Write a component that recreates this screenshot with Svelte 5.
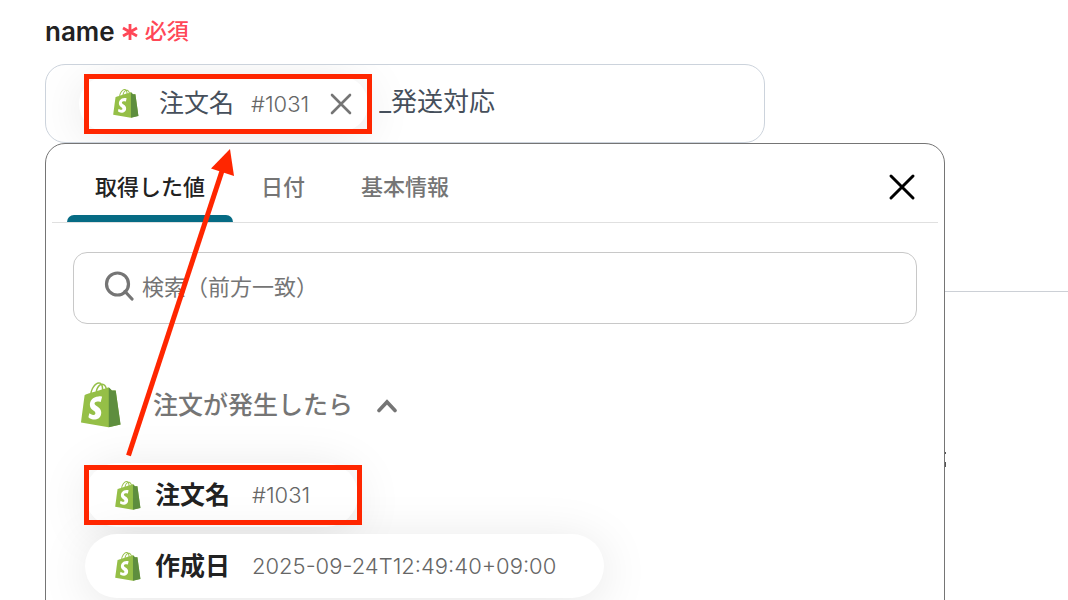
<script lang="ts">
  let suffix = $state('_発送対応');
  let query = $state('');
  let activeTab = $state('取得した値');
  let open = $state(true);
  let expanded = $state(true);
  let attached = $state(true);

  const tabs = ['取得した値', '日付', '基本情報'];
  const outputs = [
    { label: '注文名', value: '#1031' },
    { label: '作成日', value: '2025-09-24T12:49:40+09:00' }
  ];
</script>

{#snippet shopify()}
  <svg class="shopify" viewBox="0 0 110 125" aria-hidden="true">
    <path fill="#95bf47" d="M95.9 23.9c-.1-.6-.6-1-1.1-1s-9.3-.2-9.3-.2-7.4-7.2-8.1-7.9-2.2-.5-2.7-.3c0 0-1.4.4-3.7 1.1-.4-1.3-1-2.8-1.8-4.4-2.6-5-6.5-7.7-11.1-7.7-.3 0-.6 0-1 .1-.1-.2-.3-.3-.4-.5-2-2.2-4.6-3.2-7.7-3.1-6 .2-12 4.5-16.8 12.2-3.4 5.4-6 12.2-6.8 17.5-6.9 2.1-11.7 3.6-11.8 3.7-3.5 1.1-3.6 1.2-4 4.5C9.3 40.4.1 110.8.1 110.8l75.6 13.1 32.8-8.1S96 24.5 95.9 23.9zM67.2 16.8c-1.8.5-3.8 1.2-5.9 1.8 0-3-.4-7.3-1.8-10.9 4.5.9 6.7 6 7.7 9.1zM57.2 19.9c-4 1.2-8.4 2.6-12.8 3.9 1.2-4.7 3.6-9.4 6.4-12.5 1.1-1.1 2.6-2.4 4.3-3.2 1.8 3.5 2.2 8.4 2.1 11.8zM49.1 4c1.4 0 2.6.3 3.6.9-1.6.8-3.2 2.1-4.7 3.6-3.8 4.1-6.7 10.5-7.9 16.6-3.6 1.1-7.2 2.2-10.5 3.2C31.7 18.8 39.8 4.3 49.1 4z" />
    <path fill="#5e8e3e" d="M94.8 22.9c-.5 0-9.3-.2-9.3-.2s-7.4-7.2-8.1-7.9c-.3-.3-.6-.4-1-.5V124l32.8-8.1S95.8 25.2 95.7 24.6c0-1.3-.5-1.7-.9-1.7z" />
    <path fill="#fff" d="M58 39.9l-3.8 14.4s-4.3-2-9.4-1.6c-7.5.5-7.5 5.2-7.5 6.4.4 6.4 17.3 7.8 18.3 22.9.7 11.900-6.3 20-16.4 20.6-12.2.8-18.9-6.4-18.9-6.4l2.6-11s6.7 5.1 12.1 4.7c3.5-.2 4.8-3.1 4.7-5.1-.5-8.4-14.3-7.9-15.2-21.700-.7-11.6 6.9-23.2 23.8-24.3 6.5-.4 9.7 1.1 9.700 1.100z" />
  </svg>
{/snippet}

<main class="page">
  <div class="backdrop" aria-hidden="true">
    <svg width="2" height="18" viewBox="0 0 2 18">
      <path d="M0 2H1M0 11V16" stroke="#555" stroke-width="2" />
    </svg>
  </div>

  <label class="field-label" for="name-input">
    name
    <span class="required">
      <svg width="16" height="18" viewBox="0 0 16 18" aria-hidden="true">
        <path d="M8 2V18M1 6L15 14M15 6L1 14" stroke="currentColor" stroke-width="2.8" />
      </svg>
      <span class="ja">必須</span>
    </span>
  </label>

  <div class="field">
    {#if attached}
      <span class="pill token">
        {@render shopify()}
        <span class="token-label ja">注文名</span>
        <span class="value">#1031</span>
        <button class="remove" aria-label="削除" onclick={() => (attached = false)}>
          <svg width="22" height="22" viewBox="0 0 22 22">
            <path d="M2 2L20 20M20 2L2 20" stroke="#757575" stroke-width="2.6" stroke-linecap="round" />
          </svg>
        </button>
      </span>
    {/if}
    <input id="name-input" class="field-input" type="text" bind:value={suffix} />
  </div>

  {#if open}
    <section class="panel">
      <div class="panel-head">
        <div class="tabs" role="tablist">
          {#each tabs as tab}
            <button
              class="tab"
              class:active={tab === activeTab}
              role="tab"
              aria-selected={tab === activeTab}
              onclick={() => (activeTab = tab)}
            >
              {tab}
            </button>
          {/each}
        </div>
        <button class="close" aria-label="閉じる" onclick={() => (open = false)}>
          <svg width="28" height="28" viewBox="0 0 28 28">
            <path d="M3 3L25 25M25 3L3 25" stroke="#000" stroke-width="3" stroke-linecap="round" />
          </svg>
        </button>
      </div>

      <div class="search">
        <svg width="30" height="30" viewBox="0 0 30 30" fill="none" stroke="#757575" stroke-width="3.2" aria-hidden="true">
          <circle cx="13.500" cy="13" r="11" />
          <path d="M21 20.500L28 28" stroke-linecap="round" />
        </svg>
        <input type="text" aria-label="検索" placeholder="検索（前方一致）" bind:value={query} />
      </div>

      <button class="group" aria-expanded={expanded} onclick={() => (expanded = !expanded)}>
        {@render shopify()}
        <span class="group-title ja">注文が発生したら</span>
        <svg width="20" height="16" viewBox="0 0 20 16" fill="none" aria-hidden="true">
          <path d="M2 13.500L10 5L18 13.500" stroke="#757575" stroke-width="3.600" stroke-linecap="round" />
        </svg>
      </button>

      {#if expanded}
        <div class="outputs">
          {#each outputs as output}
            <button class="pill output">
              {@render shopify()}
              <span class="output-label ja">{output.label}</span>
              <span class="value">{output.value}</span>
            </button>
          {/each}
        </div>
      {/if}
    </section>
  {/if}

  <svg class="marks" width="400" height="540" viewBox="0 0 400 540" aria-hidden="true">
    <g fill="none" stroke="#ff2600" stroke-width="5">
      <rect x="86.5" y="76.5" width="283" height="55" />
      <rect x="86.5" y="467.5" width="273" height="55" />
      <path d="M128.5 455.5L222 171" />
    </g>
    <path d="M230 149L234 176L211 168.500Z" fill="#ff2600" />
  </svg>
</main>

<style>
  :global(body) {
    margin: 0;
    background: #fff;
    overflow-x: hidden;
  }

  .page {
    position: relative;
    box-sizing: border-box;
    height: 100vh;
    padding: 12px 45px 0;
    overflow: hidden;
    font-family: Inter, 'Noto Sans CJK JP', sans-serif;
    color: #222;
  }

  button,
  input {
    font-family: inherit;
    color: inherit;
    padding: 0;
    border: none;
    background: none;
  }

  button {
    cursor: pointer;
  }

  input:focus {
    outline: none;
  }

  svg {
    display: block;
    flex: none;
  }

  /* Japanese glyphs sit low in the line box, lift them to the optical centre */
  .ja {
    padding-bottom: 5px;
  }

  /* card edge that shows behind the panel */
  .backdrop {
    position: absolute;
    top: 291px;
    left: 945px;
    right: 0;
    border-top: 1px solid #ccd0d6;
    padding-top: 159px;
  }

  .field-label {
    display: flex;
    align-items: center;
    gap: 7px;
    height: 38px;
    margin-bottom: 14px;
    font-size: 26px;
    font-weight: 600;
  }

  .required {
    display: flex;
    align-items: center;
    gap: 7px;
    color: #ff4757;
    font-size: 22px;
    font-weight: 500;
  }

  .field {
    display: flex;
    align-items: center;
    gap: 11px;
    box-sizing: border-box;
    max-width: 720px;
    height: 79px;
    padding: 0 33px;
    border: 1px solid #ccd3dc;
    border-radius: 20px;
    overflow: hidden;
    color: #464f5b;
  }

  .field-input {
    flex: 1;
    min-width: 0;
    padding-bottom: 9px;
    font-size: 26px;
  }

  .pill {
    display: flex;
    align-items: center;
    box-sizing: border-box;
    border-radius: 32px;
    background: #fff;
    box-shadow: 0 6px 50px rgba(0, 0, 0, 0.1);
  }

  .pill .shopify {
    width: 26px;
    height: 29px;
  }

  .token {
    height: 56px;
    padding: 0 16px 0 34px;
  }

  .token-label {
    margin: 0 17px 0 20px;
    font-size: 25px;
  }

  .value {
    font-size: 22px;
    font-weight: 300;
    color: #666;
  }

  .remove {
    margin-left: 21px;
  }

  .panel {
    position: relative;
    box-sizing: border-box;
    max-width: 900px;
    padding-bottom: 40px;
    border: 1px solid #757575;
    border-radius: 20px;
    background: #fff;
  }

  .panel-head {
    display: flex;
    align-items: center;
    justify-content: space-between;
    height: 78px;
    margin: 0 6px;
    padding: 0 22px 0 15px;
    border-bottom: 1px solid #e0e0e0;
  }

  .tabs {
    display: flex;
    height: 100%;
  }

  .tab {
    position: relative;
    padding: 3px 28px 0;
    font-size: 22px;
    font-weight: 500;
    color: #757575;
  }

  .tab.active {
    color: #222;
  }

  .tab.active::after {
    content: '';
    position: absolute;
    left: 0;
    right: 0;
    bottom: 0;
    height: 7px;
    border-radius: 7px 7px 0 0;
    background: #066b84;
  }

  .close {
    margin-top: 8px;
  }

  .search {
    display: flex;
    align-items: center;
    gap: 8px;
    box-sizing: border-box;
    height: 72px;
    margin: 29px 27px 0;
    padding: 0 30px;
    border: 1px solid #c8c8c8;
    border-radius: 14px;
  }

  .search svg {
    margin-bottom: 4px;
  }

  .search input {
    flex: 1;
    min-width: 0;
    padding-bottom: 2px;
    font-size: 22px;
  }

  .search input::placeholder {
    color: #757575;
    opacity: 1;
  }

  .group {
    display: flex;
    align-items: center;
    margin: 58px 0 0 35px;
    height: 46px;
  }

  .group .shopify {
    width: 40px;
    height: 46px;
  }

  .group-title {
    margin: 0 24px 0 32px;
    font-size: 25px;
    font-weight: 500;
    color: #757575;
  }

  .outputs {
    display: flex;
    flex-direction: column;
    align-items: flex-start;
    gap: 7px;
    margin: 35px 0 0 39px;
  }

  .output {
    height: 64px;
    padding: 0 48px 0 30px;
  }

  .output-label {
    margin: 0 22px 0 14px;
    font-size: 25px;
    font-weight: 600;
  }

  .marks {
    position: absolute;
    top: 0;
    left: 0;
    pointer-events: none;
  }
</style>
